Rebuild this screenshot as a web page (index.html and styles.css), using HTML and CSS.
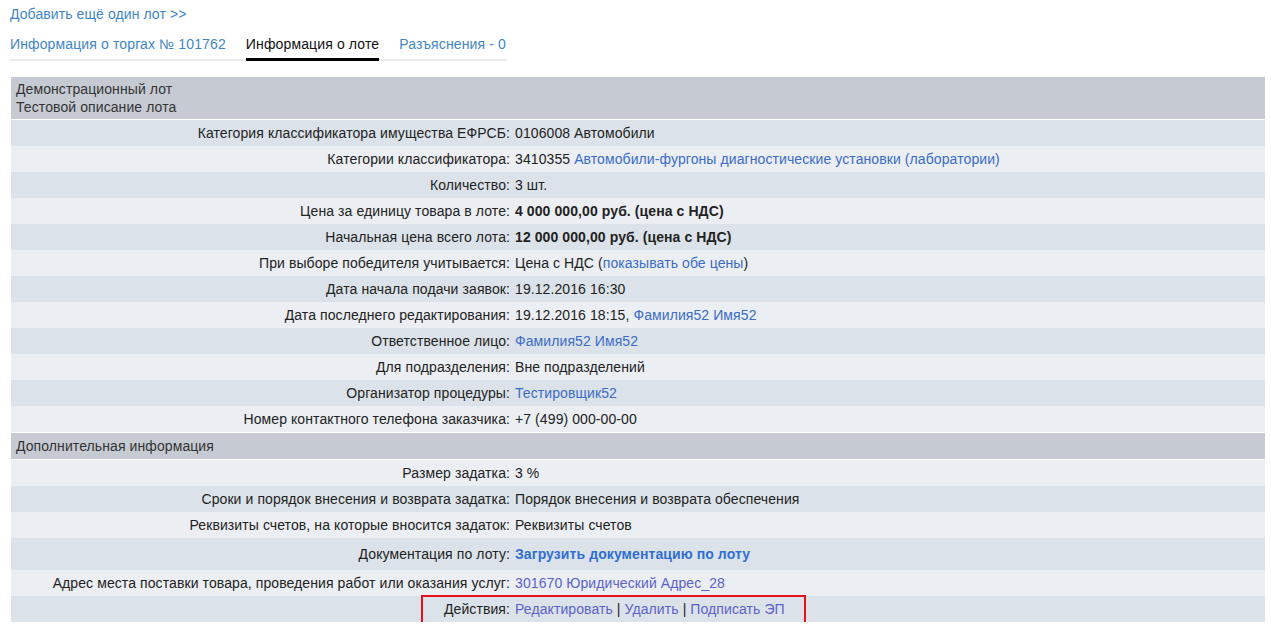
FILE: index.html
```html
<!DOCTYPE html>
<html lang="ru">
<head>
<meta charset="utf-8">
<title>Информация о лоте</title>
<link rel="stylesheet" href="styles.css">
</head>
<body>
<div class="page">
  <a class="add-link" href="#">Добавить ещё один лот &gt;&gt;</a>
  <nav class="tabs">
    <a class="tab" href="#">Информация о торгах № 101762</a>
    <span class="tab active">Информация о лоте</span>
    <a class="tab" href="#">Разъяснения - 0</a>
  </nav>
  <div class="lot">
    <div class="section-head">Демонстрационный лот<br>Тестовой описание лота</div>
    <div class="row"><div class="label">Категория классификатора имущества ЕФРСБ:</div><div class="value">0106008 Автомобили</div></div>
    <div class="row"><div class="label">Категории классификатора:</div><div class="value">3410355 <a href="#">Автомобили-фургоны диагностические установки (лаборатории)</a></div></div>
    <div class="row"><div class="label">Количество:</div><div class="value">3 шт.</div></div>
    <div class="row"><div class="label">Цена за единицу товара в лоте:</div><div class="value"><b>4 000 000,00 руб. (цена с НДС)</b></div></div>
    <div class="row"><div class="label">Начальная цена всего лота:</div><div class="value"><b>12 000 000,00 руб. (цена с НДС)</b></div></div>
    <div class="row"><div class="label">При выборе победителя учитывается:</div><div class="value">Цена с НДС (<a href="#">показывать обе цены</a>)</div></div>
    <div class="row"><div class="label">Дата начала подачи заявок:</div><div class="value">19.12.2016 16:30</div></div>
    <div class="row"><div class="label">Дата последнего редактирования:</div><div class="value">19.12.2016 18:15, <a href="#">Фамилия52 Имя52</a></div></div>
    <div class="row"><div class="label">Ответственное лицо:</div><div class="value"><a href="#">Фамилия52 Имя52</a></div></div>
    <div class="row"><div class="label">Для подразделения:</div><div class="value">Вне подразделений</div></div>
    <div class="row"><div class="label">Организатор процедуры:</div><div class="value"><a href="#">Тестировщик52</a></div></div>
    <div class="row"><div class="label">Номер контактного телефона заказчика:</div><div class="value">+7 (499) 000-00-00</div></div>
    <div class="section-head single">Дополнительная информация</div>
    <div class="row"><div class="label">Размер задатка:</div><div class="value">3 %</div></div>
    <div class="row"><div class="label">Сроки и порядок внесения и возврата задатка:</div><div class="value">Порядок внесения и возврата обеспечения</div></div>
    <div class="row"><div class="label">Реквизиты счетов, на которые вносится задаток:</div><div class="value">Реквизиты счетов</div></div>
    <div class="row tall"><div class="label">Документация по лоту:</div><div class="value"><a class="doc-link" href="#">Загрузить документацию по лоту</a></div></div>
    <div class="row"><div class="label">Адрес места поставки товара, проведения работ или оказания услуг:</div><div class="value"><a class="visited" href="#">301670 Юридический Адрес_28</a></div></div>
    <div class="row actions"><div class="label">Действия:</div><div class="value"><a class="visited" href="#">Редактировать</a> | <a class="visited" href="#">Удалить</a> | <a class="visited" href="#">Подписать ЭП</a></div></div>
  </div>
  <div class="highlight"></div>
</div>
</body>
</html>
```

FILE: styles.css
```css
html, body {
  margin: 0;
  padding: 0;
  background: #ffffff;
}

body {
  font-family: "Liberation Sans", Arial, sans-serif;
  font-size: 14px;
  letter-spacing: 0.09px;
  color: #222222;
}

a {
  color: #3a6cc8;
  text-decoration: none;
}

.page {
  position: relative;
  padding: 6px 6px 0 10px;
}

.add-link {
  display: block;
  font-size: 14px;
  line-height: 16px;
  color: #3f86c8;
}

.tabs {
  display: flex;
  width: 497px;
  margin-top: 13px;
  border-bottom: 2px solid #ebebe7;
  gap: 20px;
}

.tab {
  display: block;
  font-size: 14px;
  line-height: 18px;
  padding-bottom: 5px;
  letter-spacing: 0.13px;
  color: #3f86c8;
}

.tab.active {
  color: #111111;
  border-bottom: 3px solid #000000;
  margin-bottom: -2px;
}

.lot {
  width: 1254px;
  margin: 16px 0 0 1px;
}

.section-head {
  background: #c6cbd3;
  color: #333333;
  padding: 3px 5px;
  line-height: 18px;
  border-bottom: 1px solid #ffffff;
}

.section-head.single {
  border-top: 1px solid #ffffff;
  padding: 4px 5px;
}

.row {
  display: grid;
  grid-template-columns: 501px 1fr;
  min-height: 26px;
  align-items: center;
  background: #dce2e9;
}

.row:nth-child(odd) {
  background: #ebeef2;
}

.row.tall {
  min-height: 32px;
}

.label {
  text-align: right;
  padding-right: 2px;
  line-height: 16px;
}

.value {
  padding-left: 3px;
  line-height: 16px;
}

.doc-link {
  font-weight: bold;
  font-size: 14px;
  color: #2f6fd3;
}

.visited {
  color: #5b62c9;
}

.highlight {
  position: absolute;
  left: 421px;
  top: 595px;
  width: 381px;
  height: 25px;
  border: 2px solid #e8101a;
  pointer-events: none;
}
```
